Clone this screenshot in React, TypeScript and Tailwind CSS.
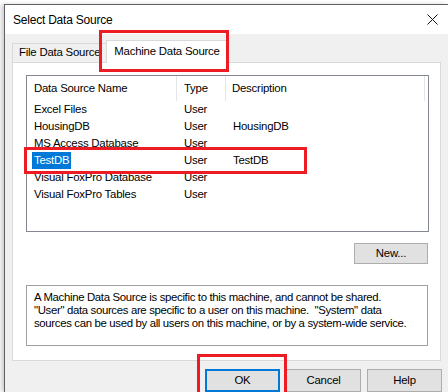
import React from "react";

const rows = [
  { name: "Excel Files", type: "User", desc: "" },
  { name: "HousingDB", type: "User", desc: "HousingDB" },
  { name: "MS Access Database", type: "User", desc: "" },
  { name: "TestDB", type: "User", desc: "TestDB", selected: true },
  { name: "Visual FoxPro Database", type: "User", desc: "" },
  { name: "Visual FoxPro Tables", type: "User", desc: "" },
];

function CloseIcon() {
  return (
    <svg width="11" height="11" viewBox="0 0 11 11" fill="none">
      <path d="M0.5 0.5 L10.5 10.5 M10.5 0.5 L0.5 10.5" stroke="#111" strokeWidth="1" />
    </svg>
  );
}

export default function App() {
  return (
    <div className="relative w-[448px] h-[392px] overflow-hidden bg-white text-[11.4px] tracking-[-0.22px] text-black whitespace-nowrap font-['Liberation_Sans',Arial,sans-serif]">
      {/* window frame */}
      <div className="ml-[4px] mt-[4px] h-[388px] flex flex-col border-l border-t border-[#5f5f5f] shadow-[-3px_0_4px_rgba(0,0,0,0.18)]">
        {/* title bar */}
        <div className="h-[29px] shrink-0 bg-white flex items-center justify-between pl-[8px] pr-[10px]">
          <span className="text-[12px]">Select Data Source</span>
          <CloseIcon />
        </div>

        {/* body */}
        <div className="flex-1 bg-[#f0f0f0] pl-[7px] pt-[6px]">
          {/* tabs */}
          <div className="flex items-end h-[22px]">
            <div className="h-[19px] flex items-center pl-[6px] pr-[8px] border-l border-t border-r border-[#d9d9d9] bg-[#f0f0f0]">
              File Data Source
            </div>
            <div className="relative z-10 -ml-[3px] -mb-px h-[23px] w-[121px] flex items-center pl-[7px] pb-[1px] border-l border-t border-r border-[#d9d9d9] bg-white">
              Machine Data Source
            </div>
          </div>

          {/* tab page */}
          <div className="w-[429px] h-[299px] border border-[#d9d9d9] bg-white pl-[13px] pt-[12px]">
            {/* list view */}
            <div className="w-[403px] h-[157px] border border-[#828790] bg-white">
              <div className="flex h-[25px]">
                <div className="w-[150px] border-r border-[#e5e5e5] pl-[7px] flex items-center">Data Source Name</div>
                <div className="w-[49px] border-r border-[#e5e5e5] pl-[7px] flex items-center">Type</div>
                <div className="w-[199px] border-r border-[#e5e5e5] pl-[6px] flex items-center">Description</div>
              </div>
              {rows.map((r) => (
                <div key={r.name} className="flex h-[17px]">
                  <div className="w-[150px] pl-[7px] flex items-center">
                    {r.selected ? (
                      <span className="-ml-[2px] px-[2px] h-[17px] flex items-center bg-[#0078d7] text-white">{r.name}</span>
                    ) : (
                      <span>{r.name}</span>
                    )}
                  </div>
                  <div className="w-[50px] pl-[7px] flex items-center">{r.type}</div>
                  <div className="w-[199px] pl-[6px] flex items-center">{r.desc}</div>
                </div>
              ))}
            </div>

            {/* new button */}
            <div className="w-[403px] pr-[1px] mt-[11px] flex justify-end">
              <button className="w-[74px] h-[21px] bg-[#e1e1e1] border border-[#adadad] flex items-center justify-center">
                New...
              </button>
            </div>

            {/* description */}
            <div className="mt-[21px] w-[402px] h-[61px] border border-[#a0a0a0] pl-[7px] pt-[5px] leading-[13px] tracking-[-0.34px]">
              <p>A Machine Data Source is specific to this machine, and cannot be shared.</p>
              <p>"User" data sources are specific to a user on this machine.&nbsp; "System" data</p>
              <p>sources can be used by all users on this machine, or by a system-wide service.</p>
            </div>
          </div>

          {/* dialog buttons */}
          <div className="w-[430px] mt-[8px] flex justify-end gap-[6px]">
            <button className="w-[75px] h-[23px] bg-[#e1e1e1] border-2 border-[#0078d7] flex items-center justify-center">OK</button>
            <button className="w-[75px] h-[23px] bg-[#e1e1e1] border border-[#adadad] flex items-center justify-center">Cancel</button>
            <button className="w-[75px] h-[23px] bg-[#e1e1e1] border border-[#adadad] flex items-center justify-center">Help</button>
          </div>
        </div>
      </div>

      {/* red annotation boxes */}
      <div className="absolute left-[99px] top-[30px] w-[130px] h-[42px] border-[3px] border-[#ed1c24] z-20" />
      <div className="absolute left-[24px] top-[147px] w-[283px] h-[27px] border-[3px] border-[#ed1c24] z-20" />
      <div className="absolute left-[197px] top-[354px] w-[90px] h-[45px] border-[3px] border-[#ed1c24] z-20" />
    </div>
  );
}
